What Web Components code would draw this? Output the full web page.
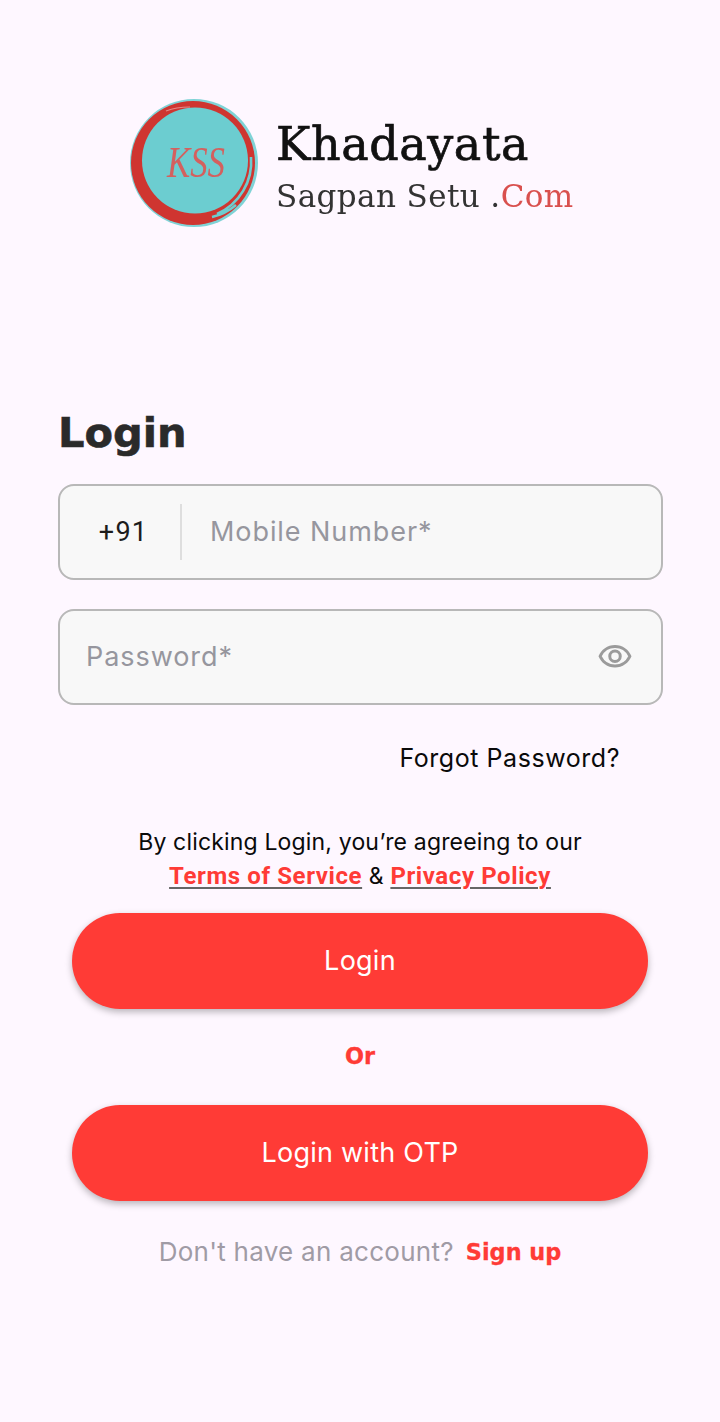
<!DOCTYPE html>
<html lang="en">
<head>
<meta charset="utf-8">
<title>Login</title>
<style>
  html, body { margin: 0; background: #fef7ff; }
</style>
</head>
<body>
<login-page></login-page>
<script>
const body = '"Inter", "Liberation Sans", sans-serif'
const heavy = '"DejaVu Sans", sans-serif'

customElements.define('app-logo', class extends HTMLElement {
  constructor () {
    super()
    this.attachShadow({ mode: 'open' }).innerHTML = `
<style>
  :host { display: flex; gap: 18px; height: 128px; padding-left: 130px; filter: blur(.45px); }
  svg { width: 128px; height: 128px; flex: none; }
  .words { display: flex; flex-direction: column; padding-top: 20px; font-family: "DejaVu Serif", serif; }
  .top { font-size: 46px; line-height: 50px; height: 50px; color: #111; letter-spacing: .6px; -webkit-text-stroke: .7px #111; }
  .bottom { font-size: 31px; line-height: 44px; margin-top: 5px; color: #333; letter-spacing: .4px; white-space: pre; }
  .bottom span { color: #d9504e; }
</style>
<svg viewBox="0 0 128 128">
  <circle cx="64" cy="64" r="64" fill="#7fd3d6"/>
  <circle cx="63" cy="64" r="62" fill="#cf3530"/>
  <circle cx="65" cy="61.5" r="53" fill="#6ccdd0"/>
  <path d="M121 58a57 57 0 0 1-34 57M106 106a57 57 0 0 1-24 12" fill="none" stroke="#6ccdd0" stroke-width="2.6"/>
  <path d="M36 12q10-4 24-4" fill="none" stroke="#e58a88" stroke-width="1.2"/>
  <text x="37" y="78" textLength="58" lengthAdjust="spacingAndGlyphs" font-family="Liberation Serif, serif" font-style="italic" font-size="44" fill="#d4605e">KSS</text>
</svg>
<div class="words">
  <div class="top">Khadayata</div>
  <div class="bottom">Sagpan Setu .<span>Com</span></div>
</div>`
  }
})

customElements.define('text-field', class extends HTMLElement {
  constructor () {
    super()
    this.attachShadow({ mode: 'open' }).innerHTML = `
<style>
  :host { display: flex; align-items: center; box-sizing: border-box; width: 605px; height: 96px; background: #f8f8f8; border: 2px solid #b8b8b8; border-radius: 16px; font-family: ${body}; font-size: 27px; }
  .hint { flex: 1; padding-bottom: 1px; color: #96969e; letter-spacing: .93px; }
  :host(:not([code])) .hint { padding-left: 26px; }
  ::slotted([slot=prefix]) { display: flex; align-items: center; justify-content: center; box-sizing: border-box; width: 122px; height: 56px; padding-left: 7px; margin-right: 28px; border-right: 2px solid #dedede; color: #1c1c1c; font: 27px Roboto, sans-serif; letter-spacing: 1.2px; }
  ::slotted([slot=suffix]) { margin-right: 28px; }
</style>
<slot name="prefix"></slot>
<div class="hint"><slot></slot></div>
<slot name="suffix"></slot>`
  }
})

customElements.define('red-button', class extends HTMLElement {
  constructor () {
    super()
    this.attachShadow({ mode: 'open' }).innerHTML = `
<style>
  :host { display: flex; align-items: center; justify-content: center; width: 576px; height: 96px; padding-bottom: 2px; box-sizing: border-box; border-radius: 48px; background: #ff3b36; color: #fff; font-family: ${body}; font-size: 27px; letter-spacing: .25px; box-shadow: 0 3px 7px rgba(0, 0, 0, .28); }
</style>
<slot></slot>`
  }
})

customElements.define('login-page', class extends HTMLElement {
  constructor () {
    super()
    this.attachShadow({ mode: 'open' }).innerHTML = `
<style>
  :host { display: flex; flex-direction: column; box-sizing: border-box; height: 1422px; padding-top: 99px; }
  h1 { margin: 181px 0 26px 58px; font: 700 41.6px/50px ${heavy}; color: #2a2a2a; -webkit-text-stroke: .6px #2a2a2a; }
  .fields { display: flex; flex-direction: column; gap: 29px; margin-left: 58px; }
  .forgot { margin: 38px 100px 0 0; text-align: right; font: 25px/30px ${body}; color: #0a0a0a; letter-spacing: .55px; }
  .terms { margin-top: 52px; text-align: center; font: 23px/34px ${body}; letter-spacing: .17px; color: #0a0a0a; }
  .terms a { font: 700 24px Roboto, sans-serif; letter-spacing: .6px; color: #ff3b36; text-decoration: underline; text-decoration-color: #666; text-decoration-thickness: 2px; text-underline-offset: 3px; }
  .actions { display: flex; flex-direction: column; align-items: center; margin-top: 20px; }
  .or { display: flex; align-items: center; height: 94px; padding-bottom: 2px; font: 700 22.4px ${heavy}; color: #ff3b36; -webkit-text-stroke: .3px #ff3b36; }
  .signup { display: flex; justify-content: center; gap: 12px; margin-top: 36px; font: 26px/30px ${body}; letter-spacing: .27px; color: #a09ba5; }
  .signup b { font: 700 22.4px/30px ${heavy}; letter-spacing: 0; color: #ff3b36; -webkit-text-stroke: .3px #ff3b36; }
  svg { display: block; width: 36px; height: 36px; fill: #9b9b9b; }
</style>
<app-logo></app-logo>
<h1>Login</h1>
<div class="fields">
  <text-field code><span slot="prefix">+91</span>Mobile Number*</text-field>
  <text-field>Password*
    <svg slot="suffix" viewBox="0 0 24 24"><path d="M12 6a9.77 9.77 0 0 1 8.82 5.5A9.77 9.77 0 0 1 12 17a9.77 9.77 0 0 1-8.82-5.5A9.77 9.77 0 0 1 12 6m0-2C7 4 2.73 7.11 1 11.5 2.73 15.89 7 19 12 19s9.27-3.11 11-7.5C21.27 7.11 17 4 12 4zm0 5a2.5 2.5 0 1 1 0 5 2.5 2.5 0 0 1 0-5m0-2a4.5 4.5 0 1 0 0 9 4.5 4.5 0 0 0 0-9z"/></svg>
  </text-field>
</div>
<div class="forgot">Forgot Password?</div>
<div class="terms">By clicking Login, you’re agreeing to our<br><a>Terms of Service</a> &amp; <a>Privacy Policy</a></div>
<div class="actions">
  <red-button>Login</red-button>
  <div class="or">Or</div>
  <red-button>Login with OTP</red-button>
</div>
<div class="signup"><span>Don't have an account?</span><b>Sign up</b></div>`
  }
})
</script>
</body>
</html>
